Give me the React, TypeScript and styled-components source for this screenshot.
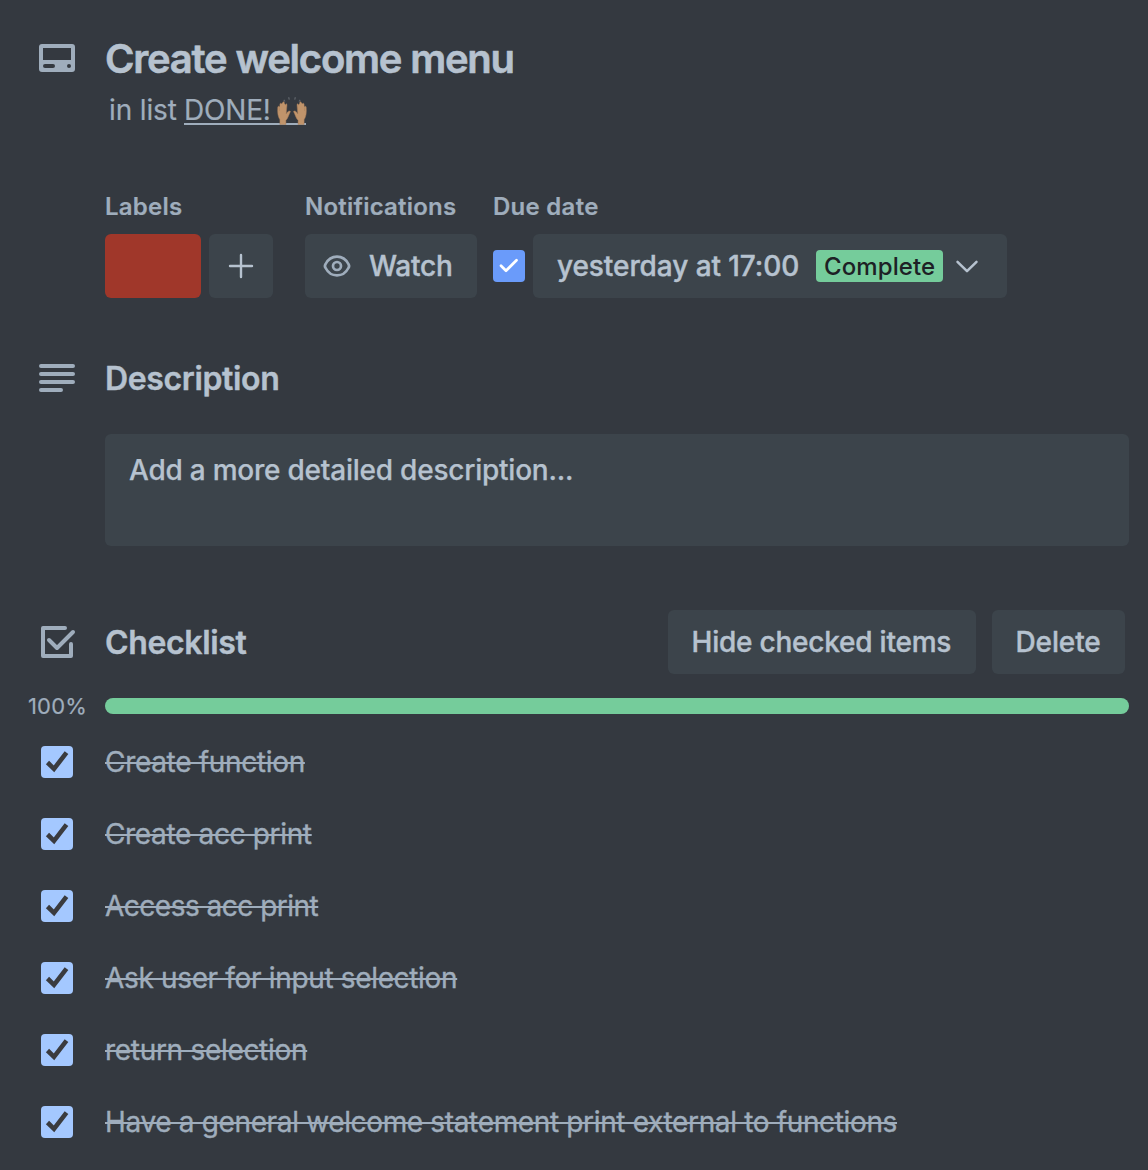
import React from "react";
import styled, { createGlobalStyle, css } from "styled-components";

const color = {
  surface: "#343940",
  control: "#3c444b",
  text: "#b6c2cf",
  subtle: "#9fadbc",
  red: "#a0372a",
  green: "#75cc9b",
  blue: "#6a9bfa",
  lightBlue: "#a4c8ff",
};

const GlobalStyle = createGlobalStyle`
  * { box-sizing: border-box; }
  body {
    margin: 0;
    background: ${color.surface};
    color: ${color.text};
    font-family: Inter, "Liberation Sans", sans-serif;
    font-size: 28px;
    -webkit-font-smoothing: antialiased;
  }
  h2, h3, h4, p, ul { margin: 0; padding: 0; font-weight: inherit; }
`;

const Card = styled.main`
  width: 1148px;
  height: 1170px;
  padding: 34px 19px 0 33px;
  overflow: hidden;
  background: ${color.surface};
`;

const Row = styled.div<{ $top?: number }>`
  display: flex;
  align-items: center;
  margin-top: ${(p) => p.$top ?? 0}px;
`;

const Gutter = styled.div`
  flex: 0 0 72px;
  height: 48px;
  color: ${color.subtle};
`;

const Glyph = styled.svg<{ $size: number }>`
  display: block;
  flex: none;
  width: ${(p) => p.$size}px;
  height: ${(p) => p.$size}px;
`;

const text = css<{ $track?: number }>`
  letter-spacing: ${(p) => p.$track ?? 0}px;
  white-space: nowrap;
`;

const Title = styled.h2<{ $track?: number }>`
  ${text}
  padding-top: 2px;
  font-size: 40px;
  font-weight: 600;
  line-height: 46px;
  -webkit-text-stroke: 0.6px;
`;

const ListLine = styled.p<{ $track?: number }>`
  ${text}
  display: flex;
  align-items: center;
  margin: 8px 0 0 76px;
  line-height: 40px;
  color: ${color.subtle};
  white-space: pre;
  -webkit-text-stroke: 0.2px;
`;

const ListLink = styled.span`
  display: flex;
  align-items: center;
  height: 29px;
  margin-left: -0.5px;
  padding-top: 2px;
  border-bottom: 2px solid ${color.subtle};
`;

const Hands = styled.svg`
  width: 30px;
  height: 29px;
  margin: 0 -1px 0 -1.5px;
`;

const Details = styled.section`
  display: flex;
  margin: 65px 0 0 72px;
`;

const Detail = styled.div<{ $gap: number }>`
  margin-right: ${(p) => p.$gap}px;
`;

const DetailName = styled.h4<{ $track?: number }>`
  ${text}
  height: 24px;
  margin-bottom: 15px;
  font-size: 24px;
  font-weight: 600;
  line-height: 24px;
  color: ${color.subtle};
  -webkit-text-stroke: 0.2px;
`;

const Controls = styled.div`
  display: flex;
  align-items: center;
  gap: 8px;
`;

const Swatch = styled.div`
  width: 96px;
  height: 64px;
  border-radius: 6px;
  background: ${color.red};
`;

const Button = styled.button<{ $w: number; $track?: number; $pad?: number }>`
  ${text}
  display: flex;
  align-items: center;
  width: ${(p) => p.$w}px;
  height: 64px;
  padding: 0 0 0 ${(p) => p.$pad ?? 24}px;
  border: 0;
  border-radius: 6px;
  background: ${color.control};
  color: ${color.text};
  font: 500 28px Inter, "Liberation Sans", sans-serif;
  -webkit-text-stroke: 0.4px;
`;

const WatchText = styled.span`
  margin-left: 16px;
`;

const DueCheck = styled.div`
  display: grid;
  place-items: center;
  width: 32px;
  height: 32px;
  border-radius: 4px;
  background: ${color.blue};
  color: #fff;
`;

const DueText = styled.span`
  width: 259px;
  text-align: left;
`;

const Badge = styled.span`
  width: 127px;
  height: 32px;
  margin-right: 8px;
  padding-left: 8px;
  border-radius: 4px;
  background: ${color.green};
  color: #1d2125;
  font-size: 24px;
  font-weight: 500;
  line-height: 33px;
  letter-spacing: 0.1px;
  text-align: left;
  -webkit-text-stroke: 0;
`;

const Heading = styled.h3<{ $track?: number }>`
  ${text}
  flex: 1;
  padding-top: 2px;
  font-size: 32px;
  font-weight: 600;
  line-height: 46px;
  -webkit-text-stroke: 0.4px;
`;

const Description = styled.div<{ $track?: number }>`
  ${text}
  height: 112px;
  margin: 32px 0 0 72px;
  padding: 16px 24px;
  border-radius: 6px;
  background: ${color.control};
  font-weight: 500;
  line-height: 40px;
  -webkit-text-stroke: 0.25px;
`;

const Actions = styled.div`
  display: flex;
  gap: 16px;
  margin-right: 4px;
`;

const Percent = styled.span`
  width: 77px;
  margin-left: -5px;
  font-size: 22px;
  line-height: 16px;
  letter-spacing: 0.15px;
  color: ${color.subtle};
  -webkit-text-stroke: 0.2px;
`;

const Track = styled.div`
  flex: 1;
  height: 16px;
  border-radius: 8px;
  background: ${color.control};
`;

const Fill = styled.div`
  height: 16px;
  border-radius: 8px;
  background: ${color.green};
`;

const Items = styled.ul`
  margin-top: 12px;
  list-style: none;
`;

const Item = styled.li<{ $track?: number }>`
  ${text}
  display: flex;
  align-items: center;
  height: 72px;
  padding-left: 8px;
  color: ${color.subtle};
  -webkit-text-stroke: 0.35px;
`;

const ItemBox = styled.span`
  width: 32px;
  height: 32px;
  margin-right: 32px;
  border-radius: 4px;
  background: ${color.lightBlue};
`;

const ItemText = styled.span`
  text-decoration: line-through;
  text-decoration-thickness: 2px;
`;

const items = [
  { label: "Create function", track: -0.32 },
  { label: "Create acc print", track: -0.34 },
  { label: "Access acc print", track: -0.5 },
  { label: "Ask user for input selection", track: -0.34 },
  { label: "return selection", track: -0.3 },
  { label: "Have a general welcome statement print external to functions", track: -0.35 },
];

const hand = "M3 29 L3 24 C1 21 0.3 17 0.8 11 C1 9.8 2.3 9.9 2.4 11 L2.8 15 L3 8 C3.1 6.6 4.7 6.6 4.8 8 L5.2 14 L5.8 6.5 C6 5.2 7.6 5.3 7.6 6.6 L7.6 14.3 L8.8 8.4 C9.1 7.2 10.4 7.5 10.3 8.8 L9.5 18 C10.6 15.8 12 14.8 13.4 15 C14.2 15.3 13.8 16.2 13.2 17 C11.8 20 11 23 9.2 24.6 L9.2 29 Z";

const RaisedHands = () => (
  <Hands viewBox="0 0 31 29" role="img" aria-label="raised hands">
    <g fill="#c0946b" stroke="#a67c58" strokeWidth=".5">
      <path d={hand} />
      <path d="M2.300 11.500L2.800 17H8.300L9.500 9.500L6.600 6.500L3.900 8Z" stroke="none" />
      <path d={hand} transform="translate(31 0) scale(-1 1)" />
      <path d="M2.300 11.500L2.800 17H8.300L9.500 9.500L6.600 6.500L3.900 8Z" stroke="none" transform="translate(31 0) scale(-1 1)" />
    </g>
    <path d="M7 3.500l1.300 1.700M12 .8l.7 2.500M19 .8l-.7 2.500M24 3.500l-1.300 1.700" stroke="#62676d" strokeWidth="1.2" />
  </Hands>
);

export default function App() {
  return (
    <>
      <GlobalStyle />
      <Card>
        <Row>
          <Gutter>
            <Glyph $size={48} viewBox="0 0 24 24" fill="currentColor" fillRule="evenodd">
              <path d="M4.500 5h15a1.500 1.500 0 0 1 1.500 1.500v11a1.500 1.500 0 0 1-1.500 1.500h-15a1.500 1.500 0 0 1-1.500-1.500v-11A1.500 1.500 0 0 1 4.500 5ZM5 7v6h14V7ZM6 15a1 1 0 0 0 0 2h4a1 1 0 0 0 0-2ZM18 15a1 1 0 1 0 0 2 1 1 0 0 0 0-2Z" />
            </Glyph>
          </Gutter>
          <Title $track={-1.22}>Create welcome menu</Title>
        </Row>
        <ListLine $track={-0.15}>
          in list <ListLink>DONE! <RaisedHands /></ListLink>
        </ListLine>

        <Details>
          <Detail $gap={32}>
            <DetailName $track={0.22}>Labels</DetailName>
            <Controls>
              <Swatch />
              <Button $w={64} $pad={16}>
                <Glyph $size={32} viewBox="0 0 32 32" fill="none" stroke="currentColor" strokeWidth="2.4" strokeLinecap="round">
                  <path d="M16 5v22M5 16h22" />
                </Glyph>
              </Button>
            </Controls>
          </Detail>
          <Detail $gap={16}>
            <DetailName $track={0.22}>Notifications</DetailName>
            <Button $w={172} $pad={16} $track={-0.25}>
              <Glyph $size={32} viewBox="0 0 32 32" fill="none" stroke={color.subtle} strokeWidth="2.7">
                <path d="M4.600 18C3.700 16.700 3.700 15.300 4.600 14C7.200 9 11 6.600 16 6.600S24.800 9 27.400 14C28.300 15.300 28.300 16.700 27.400 18C24.800 23 21 25.400 16 25.400S7.200 23 4.600 18Z" />
                <circle cx="16" cy="16" r="4" />
              </Glyph>
              <WatchText>Watch</WatchText>
            </Button>
          </Detail>
          <Detail $gap={0}>
            <DetailName $track={0.27}>Due date</DetailName>
            <Controls>
              <DueCheck>
                <Glyph $size={32} viewBox="0 0 32 32" fill="none" stroke="currentColor" strokeWidth="2.7" strokeLinecap="round" strokeLinejoin="round">
                  <path d="M8 15.800l5 5L23.500 10.200" />
                </Glyph>
              </DueCheck>
              <Button $w={474} $track={-0.08}>
                <DueText>yesterday at 17:00</DueText>
                <Badge>Complete</Badge>
                <Glyph $size={32} viewBox="0 0 32 32" fill="none" stroke="currentColor" strokeWidth="2.5" strokeLinecap="round" strokeLinejoin="round">
                  <path d="M6.500 11.800L16 21.200l9.500-9.400" />
                </Glyph>
              </Button>
            </Controls>
          </Detail>
        </Details>

        <Row $top={56}>
          <Gutter>
            <Glyph $size={48} viewBox="0 0 24 24" fill="none" stroke="currentColor" strokeWidth="2" strokeLinecap="round">
              <path d="M4 6h16M4 10h16M4 14h16M4 18h10" />
            </Glyph>
          </Gutter>
          <Heading $track={-0.36}>Description</Heading>
        </Row>
        <Description $track={-0.23}>Add a more detailed description...</Description>

        <Row $top={64}>
          <Gutter>
            <Glyph $size={48} viewBox="0 0 24 24" fill="none" stroke="currentColor" strokeWidth="2" strokeLinecap="round" strokeLinejoin="round">
              <path d="M16 5H5v14h14v-6" />
              <path d="M8 11l4 4 8-8" />
            </Glyph>
          </Gutter>
          <Heading $track={-0.36}>Checklist</Heading>
          <Actions>
            <Button $w={308} $track={-0.22} $pad={23.5}>Hide checked items</Button>
            <Button $w={133} $track={-0.12} $pad={23.5}>Delete</Button>
          </Actions>
        </Row>

        <Row $top={24}>
          <Percent>100%</Percent>
          <Track>
            <Fill style={{ width: "100%" }} />
          </Track>
        </Row>
        <Items>
          {items.map((item) => (
            <Item key={item.label} $track={item.track}>
              <ItemBox>
                <Glyph $size={32} viewBox="0 0 32 32" fill="none" stroke="#3a3b3f" strokeWidth="4.6">
                  <path d="M6.500 16.500l6.500 6.300L25.500 6.700" />
                </Glyph>
              </ItemBox>
              <ItemText>{item.label}</ItemText>
            </Item>
          ))}
        </Items>
      </Card>
    </>
  );
}
